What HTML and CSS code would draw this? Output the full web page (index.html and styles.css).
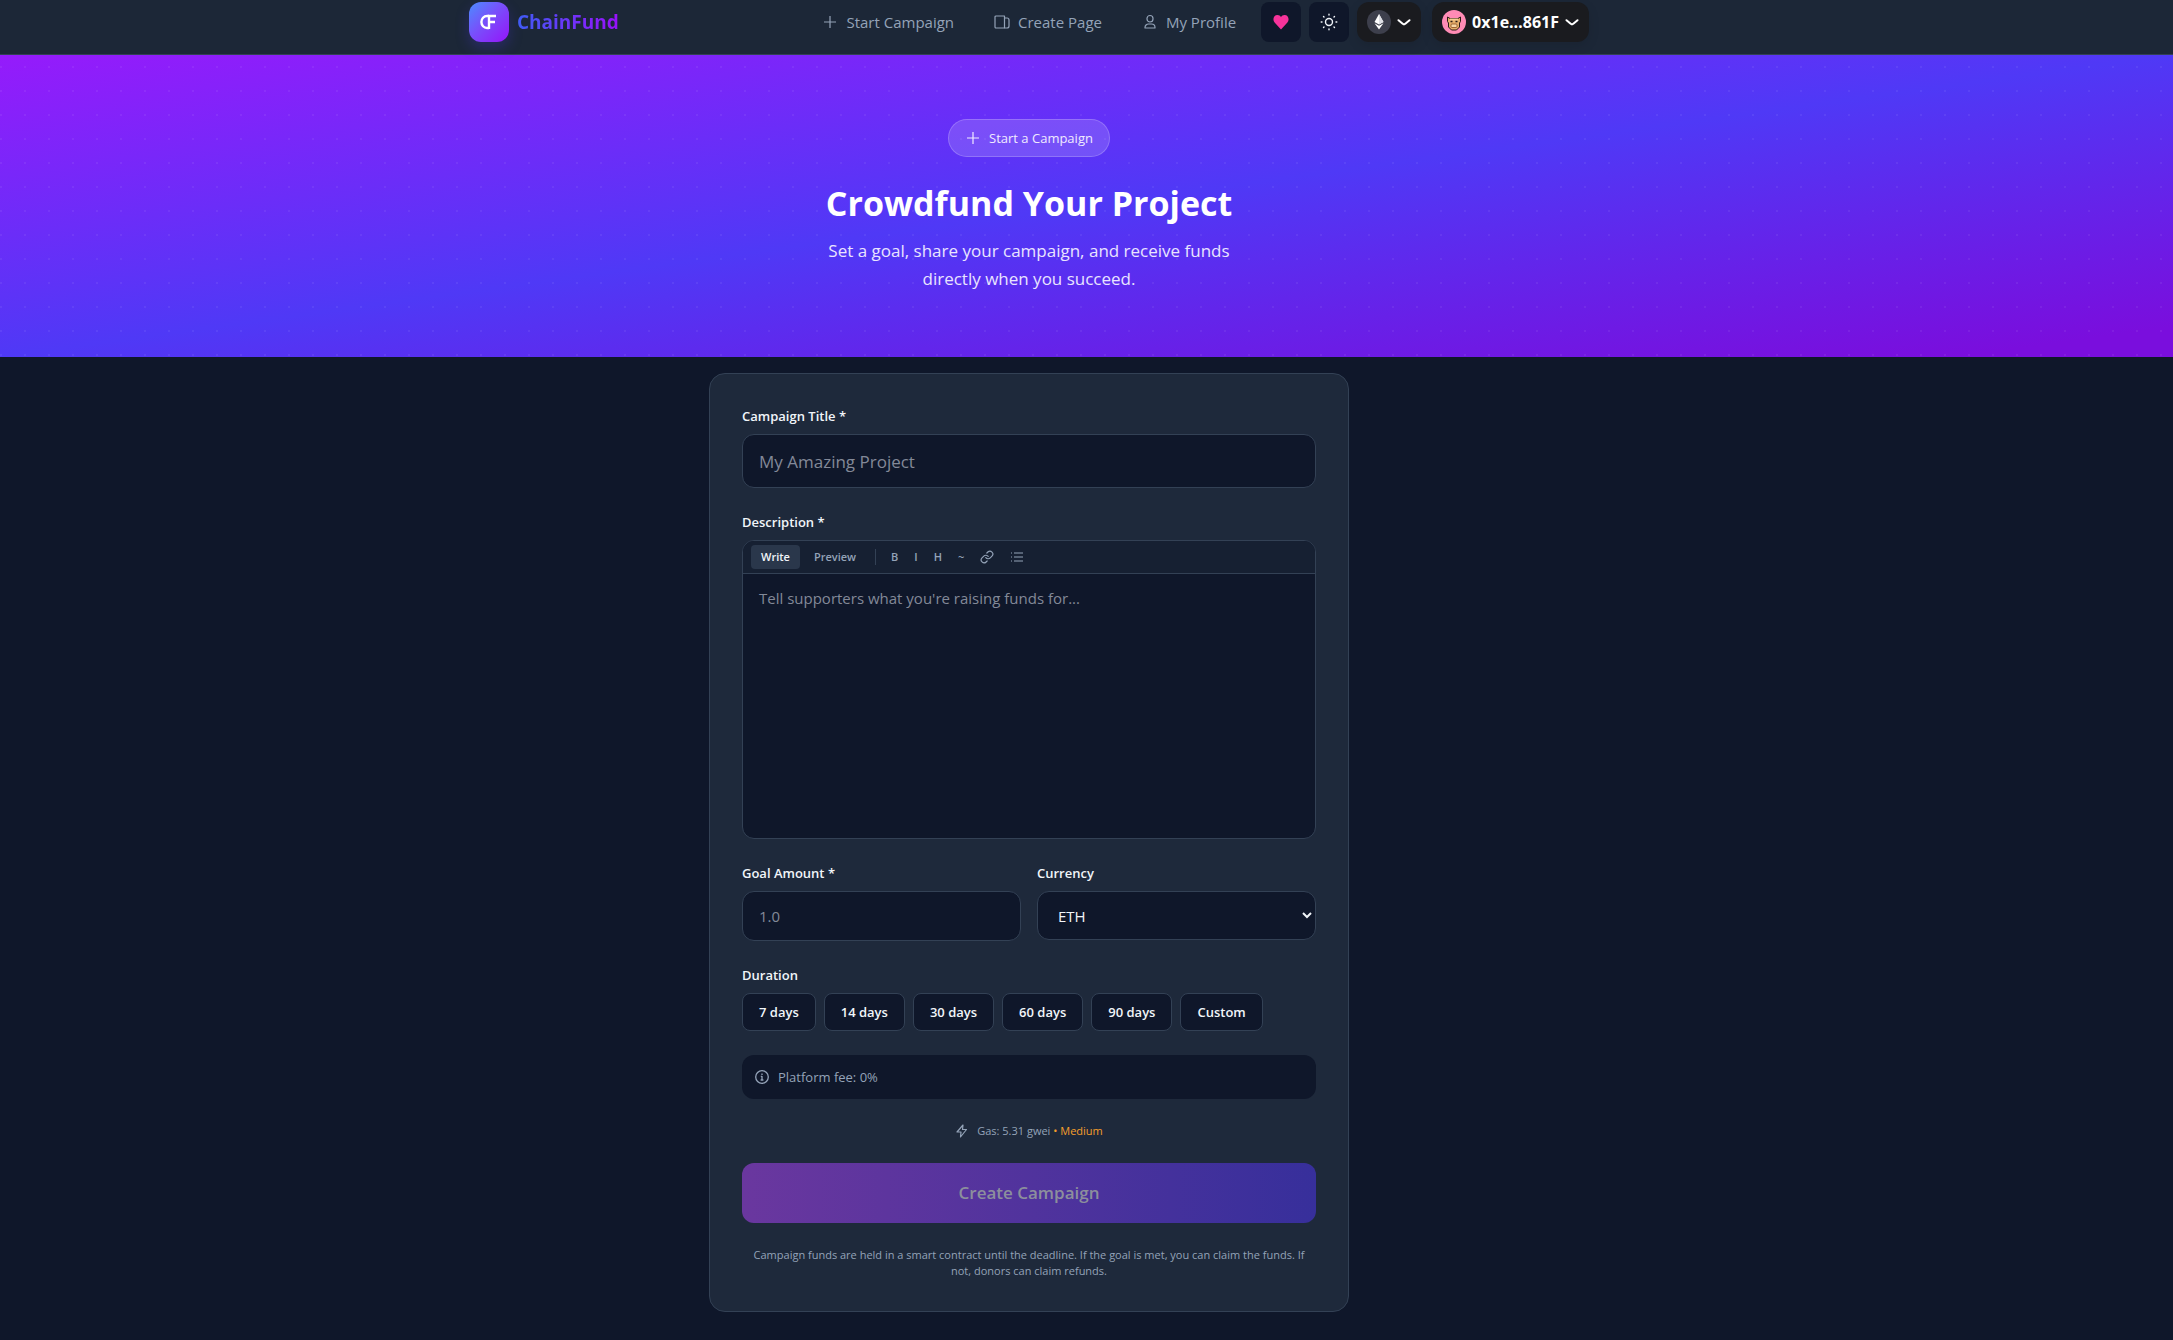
FILE: index.html
```html
<!DOCTYPE html>
<html lang="en">
<head>
    <meta charset="UTF-8">
    <meta name="viewport" content="width=device-width, initial-scale=1.0">
    <title>ChainFund</title>
    <link rel="stylesheet" href="styles.css">
</head>
<body>
    <header class="header">
        <div class="header-inner">
            <a class="brand" href="#">
                <span class="brand-logo">
                    <svg width="18" height="16" viewBox="0 0 18 16" fill="none" stroke="#fff" stroke-width="2.4">
                        <path d="M9 2H7a5.6 6 0 0 0 0 12h2"/>
                        <path d="M9 15V2h7M9 8h6"/>
                    </svg>
                </span>
                <span class="brand-name">ChainFund</span>
            </a>
            <nav class="nav">
                <a class="nav-link" href="#">
                    <svg width="16" height="16" viewBox="0 0 16 16" fill="none" stroke="currentColor" stroke-width="1.2"><path d="M8 2v12M2 8h12"/></svg>
                    Start Campaign
                </a>
                <a class="nav-link" href="#">
                    <svg width="16" height="16" viewBox="0 0 16 16" fill="none" stroke="currentColor" stroke-width="1.2" stroke-linejoin="round"><path d="M2 2h8.500v12H2a1 1 0 0 1-1-1V3a1 1 0 0 1 1-1z"/><path d="M10.500 4H13a2 2 0 0 1 2 2v6a2 2 0 0 1-2 2h-2.500"/></svg>
                    Create Page
                </a>
                <a class="nav-link" href="#">
                    <svg width="16" height="16" viewBox="0 0 16 16" fill="none" stroke="currentColor" stroke-width="1.2" stroke-linejoin="round"><rect x="5" y="1.500" width="6" height="6.500" rx="3"/><path d="M3 14v-.5a3.500 3.500 0 0 1 3.500-3.500h3a3.500 3.500 0 0 1 3.500 3.500v.5z"/></svg>
                    My Profile
                </a>
                <div class="nav-actions">
                    <button class="icon-button" type="button" aria-label="Favorites">
                        <svg width="16" height="16" viewBox="0 0 16 16" fill="#f6339a"><path d="M8 15.500 1.600 8.600C-.8 5.800.6 1 4.500 1 6 1 7.300 1.800 8 3c.7-1.200 2-2 3.500-2 3.900 0 5.300 4.800 2.900 7.600z"/></svg>
                    </button>
                    <button class="icon-button" type="button" aria-label="Toggle theme">
                        <svg width="18" height="18" viewBox="0 0 18 18" fill="none" stroke="#f1f5f9" stroke-width="1.400" stroke-linecap="round"><circle cx="9" cy="9" r="3.500"/><path d="M9 1.200v.8M9 16v.8M1.200 9H2M16 9h.8M3.500 3.500l.5.5M14 14l.5.5M3.500 14.500l.5-.5M14 4l.5-.5"/></svg>
                    </button>
                </div>
                <div class="wallet">
                    <button class="wallet-button" type="button" aria-label="Network">
                        <svg width="24" height="24" viewBox="0 0 24 24"><circle cx="12" cy="12" r="12" fill="#3d3f4c"/><path d="M12 4 7.500 12 12 14.600 16.500 12z" fill="#fff"/><path d="M12 4v10.600L16.500 12z" fill="#dfe0e6"/><path d="m7.500 13.200 4.500 6.300 4.500-6.300L12 15.800z" fill="#fff"/></svg>
                        <svg width="14" height="7" viewBox="0 0 14 7" fill="none" stroke="#fff" stroke-width="2" stroke-linecap="round"><path d="m1.500 1.200 4.200 3.600a2 2 0 0 0 2.600 0l4.200-3.600"/></svg>
                    </button>
                    <button class="wallet-button" type="button">
                        <svg width="24" height="24" viewBox="0 0 24 24"><circle cx="12" cy="12" r="12" fill="#ff8bb5"/><path d="M5.500 7 8 8.500h8L18.500 7v4.500L17.500 13v4L14.500 20h-5l-3-3v-4L5.500 11.500z" fill="#e5ae6b" stroke="#2a1c14" stroke-width="1"/><path d="M8 8.500h8v2H8z" fill="#f6cf93"/><path d="M8.500 11.500h2M13.500 11.500h2" stroke="#2a1c14" stroke-width="1.500"/><rect x="9" y="14" width="6" height="3.500" rx="1" fill="#f8d7a6" stroke="#8a4e20" stroke-width=".8"/></svg>
                        <span class="wallet-address">0x1e…861F</span>
                        <svg width="14" height="7" viewBox="0 0 14 7" fill="none" stroke="#fff" stroke-width="2" stroke-linecap="round"><path d="m1.500 1.200 4.200 3.600a2 2 0 0 0 2.600 0l4.200-3.600"/></svg>
                    </button>
                </div>
            </nav>
        </div>
    </header>

    <section class="hero">
        <div class="hero-badge">
            <svg width="16" height="16" viewBox="0 0 16 16" fill="none" stroke="currentColor" stroke-width="1.2"><path d="M8 2v12M2 8h12"/></svg>
            Start a Campaign
        </div>
        <h1 class="hero-title">Crowdfund Your Project</h1>
        <p class="hero-text">Set a goal, share your campaign, and receive funds directly when you succeed.</p>
    </section>

    <main class="main">
        <form class="card">
            <div class="field">
                <label class="label" for="title">Campaign Title *</label>
                <input class="input input-large" type="text" id="title" placeholder="My Amazing Project">
            </div>

            <div class="field">
                <label class="label" for="description">Description *</label>
                <div class="editor">
                    <div class="toolbar">
                        <button class="tab tab-active" type="button">Write</button>
                        <button class="tab" type="button">Preview</button>
                        <span class="toolbar-divider"></span>
                        <button class="tool" type="button">B</button>
                        <button class="tool" type="button">I</button>
                        <button class="tool" type="button">H</button>
                        <button class="tool" type="button">~</button>
                        <button class="tool tool-icon" type="button" aria-label="Link">
                            <svg width="14" height="14" viewBox="0 0 24 24" fill="none" stroke="currentColor" stroke-width="2" stroke-linecap="round"><path d="M10 13a5 5 0 0 0 7.540.540l3-3a5 5 0 0 0-7.070-7.070l-1.720 1.710"/><path d="M14 11a5 5 0 0 0-7.540-.540l-3 3a5 5 0 0 0 7.070 7.070l1.710-1.710"/></svg>
                        </button>
                        <button class="tool tool-icon" type="button" aria-label="List">
                            <svg width="14" height="14" viewBox="0 0 14 14" fill="none" stroke="currentColor" stroke-width="1.200"><path d="M4 3h9M4 7h9M4 11h9M1 3h1M1 7h1M1 11h1"/></svg>
                        </button>
                    </div>
                    <textarea class="editor-text" id="description" placeholder="Tell supporters what you're raising funds for..."></textarea>
                </div>
            </div>

            <div class="field-row">
                <div class="field">
                    <label class="label" for="goal">Goal Amount *</label>
                    <input class="input" type="text" id="goal" placeholder="1.0">
                </div>
                <div class="field">
                    <label class="label" for="currency">Currency</label>
                    <select class="input select" id="currency">
                        <option>ETH</option>
                    </select>
                </div>
            </div>

            <div class="field" role="group" aria-labelledby="duration">
                <span class="label" id="duration">Duration</span>
                <div class="durations">
                    <button class="duration" type="button">7 days</button>
                    <button class="duration" type="button">14 days</button>
                    <button class="duration" type="button">30 days</button>
                    <button class="duration" type="button">60 days</button>
                    <button class="duration" type="button">90 days</button>
                    <button class="duration" type="button">Custom</button>
                </div>
            </div>

            <div class="fee">
                <svg width="16" height="16" viewBox="0 0 16 16" fill="none" stroke="currentColor" stroke-width="1.300"><circle cx="8" cy="8" r="6.300"/><path d="M8 7v4M8 4.500V6M6.800 7.300H8M6.600 11h2.800"/></svg>
                Platform fee: 0%
            </div>

            <div class="gas">
                <svg width="14" height="14" viewBox="0 0 14 14" fill="none" stroke="currentColor" stroke-width="1.200" stroke-linejoin="round"><path d="M8 1 2 8h4l-.5 5 6-7.500H7.500z"/></svg>
                <span>Gas: 5.31 gwei <span class="gas-level">• Medium</span></span>
            </div>

            <button class="submit" type="submit" disabled>Create Campaign</button>

            <p class="note">Campaign funds are held in a smart contract until the deadline. If the goal is met, you can claim the funds. If not, donors can claim refunds.</p>
        </form>
    </main>
</body>
</html>
```
FILE: styles.css
```css
:root {
    --bg: #0f172a;
    --surface: #1e293b;
    --border: #334155;
    --text: #f1f5f9;
    --muted: #94a3b8;
    --placeholder: #838998;
    --side: 115px;
}

* {
    margin: 0;
    padding: 0;
    box-sizing: border-box;
}

body {
    background: var(--bg);
    color: var(--text);
    font-family: 'Segoe UI', 'Open Sans', 'Noto Sans', sans-serif;
    font-size: 16px;
    line-height: 24px;
}

button,
input,
select,
textarea {
    font: inherit;
    color: inherit;
}

button {
    border: none;
    cursor: pointer;
}

svg {
    flex-shrink: 0;
}

/* Header */
.header {
    background: #1c2737;
    border-bottom: 1px solid var(--border);
    padding: 2px var(--side) 12px 0;
}

.header-inner {
    max-width: 1120px;
    margin: 0 auto;
    display: flex;
    align-items: center;
    justify-content: space-between;
}

.brand {
    display: flex;
    align-items: center;
    gap: 8px;
    text-decoration: none;
}

.brand-logo {
    width: 40px;
    height: 40px;
    display: flex;
    align-items: center;
    justify-content: center;
    border-radius: 12px;
    background: linear-gradient(135deg, #4b8dff, #7850fa 45%, #9514fa);
    box-shadow: 0 6px 14px rgba(79, 57, 246, 0.25);
}

.brand-name {
    font-size: 19px;
    line-height: 28px;
    font-weight: 700;
    background: linear-gradient(to right, #3f5cf5, #9810fa);
    background-clip: text;
    color: transparent;
}

.nav {
    display: flex;
    align-items: center;
}

.nav-link {
    display: flex;
    align-items: center;
    gap: 8px;
    margin-right: 40px;
    font-size: 15px;
    color: var(--muted);
    text-decoration: none;
}

.nav-actions {
    display: flex;
    gap: 8px;
    margin-left: -15px;
}

.icon-button {
    width: 40px;
    height: 40px;
    display: flex;
    align-items: center;
    justify-content: center;
    background: var(--bg);
    border-radius: 8px;
}

.wallet {
    display: flex;
    gap: 11px;
    margin-left: 8px;
}

.wallet-button {
    height: 40px;
    display: flex;
    align-items: center;
    gap: 6px;
    padding: 0 10px;
    border-radius: 12px;
    background: #1a1b1f;
    box-shadow: 0 4px 12px rgba(0, 0, 0, 0.1);
    color: #fff;
}

.wallet-address {
    font-size: 16px;
    font-weight: 700;
}

/* Hero */
.hero {
    display: flex;
    flex-direction: column;
    align-items: center;
    padding: 64px var(--side) 64px 0;
    background:
        radial-gradient(circle, rgba(255, 255, 255, 0.06) 1px, transparent 1px) 13px 0 / 24px 24px,
        linear-gradient(to bottom right, #951bfb, #4f39f6 50%, #7a0edd 95%);
    text-align: center;
}

.hero-badge {
    display: flex;
    align-items: center;
    gap: 8px;
    height: 38px;
    padding: 0 16px;
    border: 1px solid rgba(255, 255, 255, 0.2);
    border-radius: 19px;
    background: rgba(255, 255, 255, 0.15);
    font-size: 13px;
    color: #f0eaff;
}

.hero-title {
    margin-top: 24px;
    font-size: 34px;
    line-height: 44px;
    font-weight: 700;
    color: #fff;
}

.hero-text {
    max-width: 448px;
    margin-top: 12px;
    font-size: 17px;
    line-height: 28px;
    color: #e9e4ff;
}

/* Form */
.main {
    padding: 16px var(--side) 28px 0;
}

.card {
    max-width: 640px;
    margin: 0 auto;
    display: flex;
    flex-direction: column;
    gap: 24px;
    padding: 32px;
    background: var(--surface);
    border: 1px solid var(--border);
    border-radius: 16px;
}

.field {
    display: flex;
    flex-direction: column;
    gap: 8px;
}

.field-row {
    display: grid;
    grid-template-columns: 1fr 1fr;
    align-items: start;
    gap: 16px;
}

.label {
    font-size: 13px;
    line-height: 20px;
    font-weight: 600;
}

.input {
    width: 100%;
    height: 50px;
    padding: 0 16px;
    background: var(--bg);
    border: 1px solid var(--border);
    border-radius: 12px;
    font-size: 15px;
}

.input-large {
    height: 54px;
    font-size: 17px;
}

.select {
    height: 49px;
}

.input::placeholder,
.editor-text::placeholder {
    color: var(--placeholder);
}

.editor {
    border: 1px solid var(--border);
    border-radius: 12px;
    background: var(--bg);
    overflow: hidden;
}

.toolbar {
    display: flex;
    align-items: center;
    padding: 4px 8px;
    background: #162032;
    border-bottom: 1px solid var(--border);
}

.tab,
.tool {
    height: 24px;
    background: transparent;
    font-size: 11px;
    line-height: 16px;
    font-weight: 600;
    color: var(--muted);
}

.tab {
    padding: 0 10px;
    margin-right: 4px;
    border-radius: 4px;
}

.tab-active {
    background: #2a374b;
    color: var(--text);
}

.toolbar-divider {
    width: 1px;
    height: 16px;
    margin: 0 7px 0 5px;
    background: var(--border);
}

.tool {
    min-width: 18px;
    padding: 0 8px;
}

.tool-icon {
    display: flex;
    align-items: center;
    padding: 0 8px;
}

.editor-text {
    display: block;
    width: 100%;
    height: 264px;
    padding: 12px 16px;
    background: transparent;
    border: none;
    resize: none;
    font-size: 15px;
}

.durations {
    display: flex;
    flex-wrap: wrap;
    gap: 8px;
}

.duration {
    height: 38px;
    padding: 0 16px;
    background: var(--bg);
    border: 1px solid var(--border);
    border-radius: 8px;
    font-size: 13px;
    font-weight: 600;
}

.fee {
    display: flex;
    align-items: center;
    gap: 8px;
    height: 44px;
    padding: 0 12px;
    background: var(--bg);
    border-radius: 12px;
    font-size: 13px;
    color: var(--muted);
}

.gas {
    display: flex;
    align-items: center;
    justify-content: center;
    gap: 8px;
    font-size: 11px;
    line-height: 16px;
    color: var(--muted);
}

.gas-level {
    color: #f59e2b;
}

.submit {
    height: 60px;
    border-radius: 12px;
    background: linear-gradient(to right, #6a379f, #372f9b);
    font-size: 17px;
    font-weight: 600;
    color: #8c8f9c;
}

.note {
    padding: 0 4px;
    font-size: 11px;
    line-height: 16px;
    text-align: center;
    color: var(--muted);
}
```
